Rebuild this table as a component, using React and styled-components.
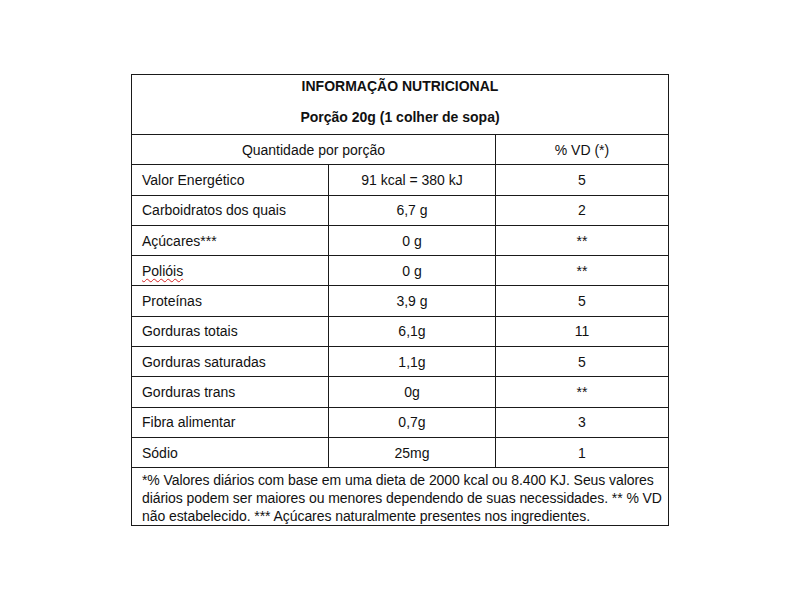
import styled, { createGlobalStyle } from "styled-components";

const GlobalStyle = createGlobalStyle`
  body {
    margin: 0;
    background: #ffffff;
    font-family: "Liberation Sans", Arial, sans-serif;
    color: #111111;
  }
`;

const Page = styled.div`
  width: 800px;
  height: 600px;
  padding-top: 74px;
  box-sizing: border-box;
  display: flex;
  justify-content: center;
  align-items: flex-start;
`;

const Table = styled.table`
  width: 537px;
  border-collapse: collapse;
  table-layout: fixed;
  font-size: 14px;
  border: 1px solid #1a1a1a;
`;

const Cell = styled.td`
  border: 1px solid #1a1a1a;
  padding: 0 10px;
  height: 29.3px;
  text-align: ${(p) => (p.$center ? "center" : "left")};
  vertical-align: middle;
  line-height: 16px;
`;

const HeaderCell = styled.td`
  border: 1px solid #1a1a1a;
  padding: 0 0 6px;
  text-align: center;
  font-weight: bold;
  font-size: 14px;
`;

const Title = styled.div`
  line-height: 22px;
  margin-bottom: 9px;
`;

const Serving = styled.div`
  line-height: 22px;
`;

const Spelled = styled.span`
  text-decoration: underline wavy #d42020;
  text-decoration-thickness: 1px;
  text-underline-offset: 2px;
`;

const Note = styled.td`
  border: 1px solid #1a1a1a;
  padding: 3px 10px 0;
  line-height: 18px;
  letter-spacing: -0.07px;
  white-space: nowrap;
`;

const rows = [
  ["Valor Energético", "91 kcal = 380 kJ", "5"],
  ["Carboidratos dos quais", "6,7 g", "2"],
  ["Açúcares***", "0 g", "**"],
  ["Polióis", "0 g", "**", true],
  ["Proteínas", "3,9 g", "5"],
  ["Gorduras totais", "6,1g", "11"],
  ["Gorduras saturadas", "1,1g", "5"],
  ["Gorduras trans", "0g", "**"],
  ["Fibra alimentar", "0,7g", "3"],
  ["Sódio", "25mg", "1"],
];

export default function App() {
  return (
    <>
      <GlobalStyle />
      <Page>
        <Table>
          <colgroup>
            <col style={{ width: 197 }} />
            <col style={{ width: 167 }} />
            <col style={{ width: 173 }} />
          </colgroup>
          <tbody>
            <tr>
              <HeaderCell colSpan={3}>
                <Title>INFORMAÇÃO NUTRICIONAL</Title>
                <Serving>Porção 20g (1 colher de sopa)</Serving>
              </HeaderCell>
            </tr>
            <tr>
              <Cell $center colSpan={2}>Quantidade por porção</Cell>
              <Cell $center>% VD (*)</Cell>
            </tr>
            {rows.map(([name, amount, vd, marked]) => (
              <tr key={name}>
                <Cell>{marked ? <Spelled>{name}</Spelled> : name}</Cell>
                <Cell $center>{amount}</Cell>
                <Cell $center>{vd}</Cell>
              </tr>
            ))}
            <tr>
              <Note colSpan={3}>
                *% Valores diários com base em uma dieta de 2000 kcal ou 8.400 KJ. Seus valores
                <br />
                diários podem ser maiores ou menores dependendo de suas necessidades. ** % VD
                <br />
                não estabelecido. *** Açúcares naturalmente presentes nos ingredientes.
              </Note>
            </tr>
          </tbody>
        </Table>
      </Page>
    </>
  );
}
